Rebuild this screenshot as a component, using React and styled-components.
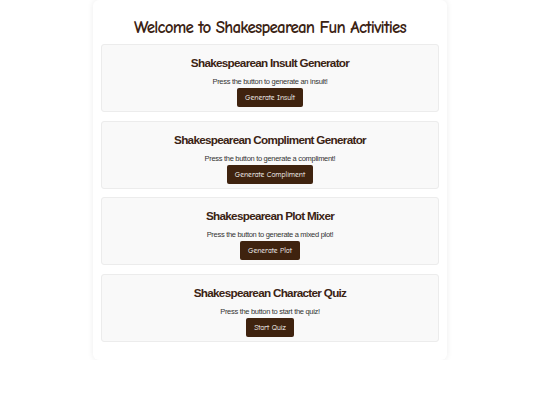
import React from 'react';
import styled, { createGlobalStyle } from 'styled-components';

const GlobalStyle = createGlobalStyle`
  body {
    margin: 0;
    background: #ffffff;
    font-family: "Liberation Sans", Arial, sans-serif;
  }
`;

const Container = styled.div`
  width: 354px;
  margin: 0 auto;
  padding: 17px 8px 10px;
  box-sizing: border-box;
  background: #fff;
  border-radius: 6px;
  box-shadow: 0 0 6px rgba(0, 0, 0, 0.08);
`;

const Title = styled.h1`
  margin: 0 0 5px;
  font-family: "Comic Sans MS", "Comic Neue", cursive;
  font-size: 17px;
  letter-spacing: -0.8px;
  line-height: 22px;
  font-weight: bold;
  text-align: center;
  color: #3b2314;
`;

const Card = styled.section`
  background: #f9f9f9;
  border: 1px solid #ececec;
  border-radius: 3px;
  padding: 6px 8px 4px;
  margin-bottom: 8.5px;
  text-align: center;
  display: flex;
  flex-direction: column;
  align-items: center;
`;

const CardTitle = styled.h2`
  margin: 4px 0 7px;
  font-size: 11.7px;
  letter-spacing: -0.7px;
  line-height: 15px;
  font-weight: bold;
  color: #3b2314;
`;

const Text = styled.p`
  margin: 0 0 1px;
  font-size: 7.5px;
  letter-spacing: -0.3px;
  line-height: 10px;
  color: #333;
`;

const Button = styled.button`
  height: 19px;
  padding: 0 8px;
  border: none;
  border-radius: 2px;
  background: #3f230f;
  color: #fff;
  font-family: "Comic Sans MS", "Comic Neue", cursive;
  font-size: 7.5px;
  cursor: pointer;
`;

const activities = [
  { title: 'Shakespearean Insult Generator', text: 'Press the button to generate an insult!', button: 'Generate Insult' },
  { title: 'Shakespearean Compliment Generator', text: 'Press the button to generate a compliment!', button: 'Generate Compliment' },
  { title: 'Shakespearean Plot Mixer', text: 'Press the button to generate a mixed plot!', button: 'Generate Plot' },
  { title: 'Shakespearean Character Quiz', text: 'Press the button to start the quiz!', button: 'Start Quiz' },
];

export default function App() {
  return (
    <>
      <GlobalStyle />
      <Container>
        <Title>Welcome to Shakespearean Fun Activities</Title>
        {activities.map((a) => (
          <Card key={a.title}>
            <CardTitle>{a.title}</CardTitle>
            <Text>{a.text}</Text>
            <Button>{a.button}</Button>
          </Card>
        ))}
      </Container>
    </>
  );
}
